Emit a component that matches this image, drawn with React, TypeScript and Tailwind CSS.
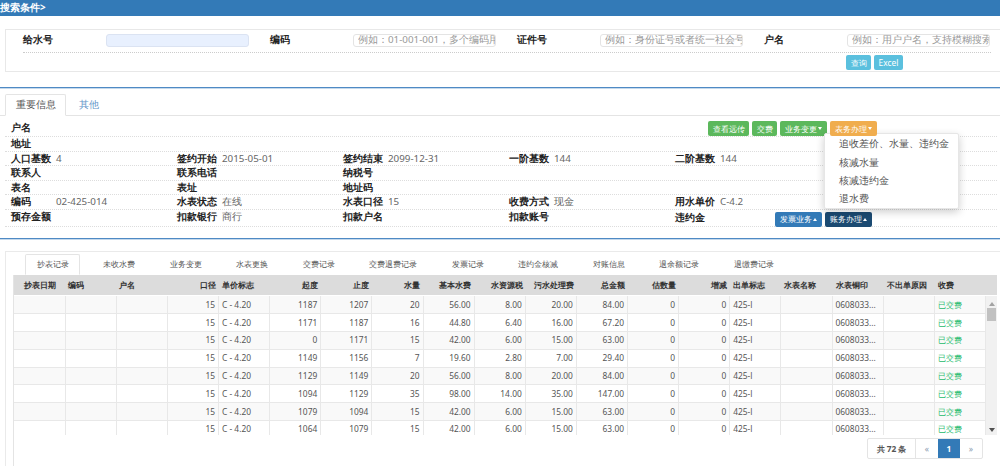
import React from "react";

type Col = { title: string; head: string; cell: string };
const R = "text-right pr-[3px]";
const L = "text-left pl-[3px]";
const cols: Col[] = [
  { title: "抄表日期", head: "text-center", cell: L },
  { title: "编码", head: L, cell: L },
  { title: "户名", head: L, cell: L },
  { title: "口径", head: R, cell: R },
  { title: "单价标志", head: L, cell: L },
  { title: "起度", head: R, cell: R },
  { title: "止度", head: R, cell: R },
  { title: "水量", head: R, cell: R },
  { title: "基本水费", head: R, cell: R },
  { title: "水资源税", head: R, cell: R },
  { title: "污水处理费", head: R, cell: R },
  { title: "总金额", head: R, cell: R },
  { title: "估数量", head: R, cell: R },
  { title: "增减", head: R, cell: R },
  { title: "出单标志", head: L, cell: L },
  { title: "水表名称", head: L, cell: L },
  { title: "水表铜印", head: L, cell: L },
  { title: "不出单原因", head: L, cell: L },
  { title: "收费", head: L, cell: L },
];

const data = [
  ["1187", "1207", "20", "56.00", "8.00", "20.00", "84.00"],
  ["1171", "1187", "16", "44.80", "6.40", "16.00", "67.20"],
  ["0", "1171", "15", "42.00", "6.00", "15.00", "63.00"],
  ["1149", "1156", "7", "19.60", "2.80", "7.00", "29.40"],
  ["1129", "1149", "20", "56.00", "8.00", "20.00", "84.00"],
  ["1094", "1129", "35", "98.00", "14.00", "35.00", "147.00"],
  ["1079", "1094", "15", "42.00", "6.00", "15.00", "63.00"],
  ["1064", "1079", "15", "42.00", "6.00", "15.00", "63.00"],
];

const rows = data.map((d) => [
  "", "", "", "15", "C - 4.20", d[0], d[1], d[2], d[3], d[4], d[5], d[6], "0", "0", "425-l", "", "0608033...", "", "已交费",
]);

const searchFields = [
  { label: "给水号", placeholder: "", filled: true },
  { label: "编码", placeholder: "例如：01-001-001，多个编码用逗号分隔", filled: false },
  { label: "证件号", placeholder: "例如：身份证号或者统一社会号", filled: false },
  { label: "户名", placeholder: "例如：用户户名，支持模糊搜索", filled: false },
];

const lowerTabs = ["抄表记录", "未收水费", "业务变更", "水表更换", "交费记录", "交费退费记录", "发票记录", "违约金核减", "对账信息", "退余额记录", "退缴费记录"];

const info: [string, string][][] = [
  [["人口基数", "4"], ["签约开始", "2015-05-01"], ["签约结束", "2099-12-31"], ["一阶基数", "144"], ["二阶基数", "144"]],
  [["联系人", ""], ["联系电话", ""], ["纳税号", ""], ["", ""], ["", ""]],
  [["表名", ""], ["表址", ""], ["地址码", ""], ["", ""], ["", ""]],
  [["编码", "02-425-014"], ["水表状态", "在线"], ["水表口径", "15"], ["收费方式", "现金"], ["用水单价", "C-4.2"]],
];

function Field({ label, value }: { label: string; value: string }) {
  return (
    <div className="flex items-center">
      <span className="w-[45px] shrink-0 font-bold text-[#222]">{label}</span>
      <span className="text-[#666]">{value}</span>
    </div>
  );
}

function Caret({ up }: { up?: boolean }) {
  return up ? (
    <span className="ml-[1px] inline-block border-x-[2.5px] border-b-[3px] border-x-transparent border-b-white" />
  ) : (
    <span className="ml-[1px] inline-block border-x-[2.5px] border-t-[3px] border-x-transparent border-t-white" />
  );
}

function Btn({ className, children }: { className: string; children: React.ReactNode }) {
  return (
    <button className={`flex h-[15px] items-center justify-center rounded-[2px] text-[8.4px] text-white ${className}`}>
      {children}
    </button>
  );
}

export default function App() {
  return (
    <div className="h-[466px] w-[1000px] overflow-hidden bg-white font-['Liberation_Sans','Noto_Sans_CJK_SC',sans-serif] text-[9.8px] leading-[14px] text-[#555]">
      <div className="flex h-[16px] items-center bg-[#337ab7] font-bold text-white">搜索条件&gt;</div>

      <div className="ml-[5px] mt-[13px] h-[43px] border-y border-l border-[#e8e8e8] pt-[3px]">
        <div className="ml-[17px] flex h-[20px] w-[968px] items-start border-b border-dotted border-[#ccc]">
          {searchFields.map((f) => (
            <div key={f.label} className="flex w-[247px] shrink-0 items-center">
              <span className="w-[83px] shrink-0 font-bold text-[#222]">{f.label}</span>
              <input
                readOnly
                placeholder={f.placeholder}
                className={`h-[13px] w-[143px] rounded-[3px] border pl-[4px] pr-0 text-[9.8px] outline-none placeholder:text-[#999] ${f.filled ? "border-[#dbe3f2] bg-[#e8f0fe]" : "border-[#e4e4e4] bg-white"}`}
              />
            </div>
          ))}
        </div>
        <div className="ml-[840px] mt-[2px] flex gap-[3px]">
          <Btn className="h-[14px] w-[25px] bg-[#5bc0de]">查询</Btn>
          <Btn className="h-[14px] w-[29px] bg-[#5bc0de]">Excel</Btn>
        </div>
      </div>

      <div className="mt-[15px] h-[2px] border-t border-[#4f8ac4] bg-[#c5d9ec]" />

      <div className="mt-[5px] flex h-[22px] items-end border-b border-[#e4e4e4] pl-[5px]">
        <div className="-mb-px flex h-[22px] w-[61px] items-center justify-center rounded-t-[2px] border border-[#e4e4e4] border-b-white bg-white text-[#555]">重要信息</div>
        <div className="flex h-[21px] items-center pl-[13px] text-[#5f96c9]">其他</div>
      </div>

      <div className="ml-[5px] mr-[3px] mt-[5px]">
        <div className="flex h-[15.6px] items-center justify-between border-b border-dotted border-[#ddd] pl-[6px]">
          <Field label="户名" value="" />
          <div className="mr-[113px] -mb-px flex translate-x-0 gap-[3px] pr-[7px]">
            <Btn className="w-[41px] bg-[#5cb85c]">查看远传</Btn>
            <Btn className="w-[25px] bg-[#5cb85c]">交费</Btn>
            <Btn className="w-[47px] bg-[#5cb85c]">业务变更<Caret /></Btn>
            <div className="relative w-[47px]">
              <Btn className="relative z-10 w-[47px] bg-[#f0ad4e]">表务办理<Caret /></Btn>
              <div className="absolute left-[-6px] top-[12px] z-0 w-[135px] rounded-[2px] border border-[#e6e6e6] bg-white pb-px pl-[14px] text-[10px] leading-[18.3px] text-[#555] shadow-[0_3px_8px_rgba(0,0,0,0.2)]">
                <div>追收差价、水量、违约金</div>
                <div>核减水量</div>
                <div>核减违约金</div>
                <div>退水费</div>
              </div>
            </div>
          </div>
        </div>
        <div className="flex h-[15px] items-center border-b border-dotted border-[#ddd] pl-[6px]">
          <Field label="地址" value="" />
        </div>
        {info.map((row, i) => (
          <div key={i} className="grid h-[14.6px] grid-cols-[repeat(5,166px)] items-center border-b border-dotted border-[#ddd] pl-[6px]">
            {row.map(([l, v], j) => (
              <Field key={j} label={l} value={v} />
            ))}
          </div>
        ))}
        <div className="grid h-[17px] grid-cols-[repeat(5,166px)] items-start border-b border-dotted border-[#ddd] pl-[6px]">
          <Field label="预存金额" value="" />
          <Field label="扣款银行" value="商行" />
          <Field label="扣款户名" value="" />
          <Field label="扣款账号" value="" />
          <div className="flex items-center">
            <span className="w-[100px] shrink-0 font-bold text-[#222]">违约金</span>
            <div className="flex gap-[3px] pt-[2px]">
              <Btn className="w-[47px] bg-[#337ab7]">发票业务<Caret up /></Btn>
              <Btn className="w-[47px] bg-[#1b4a72]">账务办理<Caret up /></Btn>
            </div>
          </div>
        </div>
      </div>

      <div className="mt-[11px] h-[2px] border-t border-[#4f8ac4] bg-[#c5d9ec]" />

      <div className="ml-[5px] mt-[11px] h-[220px] border-l border-t border-[#eaeaea] pl-[7px] pt-[2px]">
        <div className="ml-[12px] flex h-[21px] gap-[11.5px] text-[8.4px]">
          {lowerTabs.map((t, i) => (
            <div
              key={t}
              className={`flex h-[21px] items-center rounded-t-[2px] border px-[10.5px] ${i === 0 ? "border-[#e4e4e4] border-b-white" : "border-transparent"}`}
            >
              {t}
            </div>
          ))}
        </div>

        <div className="h-full border-l border-[#e4e4e4] text-[8.4px] leading-[12px]">
          <div className="h-[20px] w-[983px] bg-[#dcdcdc]">
            <table className="w-[972px] table-fixed border-collapse">
              <thead>
                <tr className="h-[20px]">
                  {cols.map((c) => (
                    <th key={c.title} className={`whitespace-nowrap p-0 font-bold text-[#333] ${c.head}`}>
                      {c.title}
                    </th>
                  ))}
                </tr>
              </thead>
            </table>
          </div>
          <div className="flex h-[140px] w-[983px] overflow-hidden pt-px">
            <table className="h-fit w-[972px] shrink-0 table-fixed border-collapse">
              <tbody>
                {rows.map((r, i) => (
                  <tr key={i} className={`h-[17.8px] border-b border-[#e8e8e8] ${i % 2 === 0 ? "bg-[#f9f9f9]" : "bg-white"}`}>
                    {r.map((v, j) => (
                      <td
                        key={j}
                        className={`overflow-hidden whitespace-nowrap border-r border-[#e8e8e8] p-0 ${cols[j].cell} ${j === 18 ? "text-[#1cb96a]" : "text-[#555]"}`}
                      >
                        {v}
                      </td>
                    ))}
                  </tr>
                ))}
              </tbody>
            </table>
            <div className="flex w-[11px] shrink-0 flex-col items-center bg-[#f1f1f1] pt-[6px]">
              <svg width="6" height="4" viewBox="0 0 6 4" className="shrink-0"><path d="M3 0 L6 4 L0 4 Z" fill="#a3a3a3" /></svg>
              <div className="mt-[2px] h-[13px] w-[9px] shrink-0 bg-[#c1c1c1]" />
              <svg width="6" height="4" viewBox="0 0 6 4" className="mt-auto mb-[3px] shrink-0"><path d="M0 0 L6 0 L3 4 Z" fill="#505050" /></svg>
            </div>
          </div>
          <div className="mt-[3px] flex w-[969px] justify-end">
            <div className="flex h-[21px] overflow-hidden rounded-[2px] border border-[#e4e4e4] leading-[19px]">
              <span className="w-[48px] border-r border-[#e4e4e4] text-center font-bold text-[#555]">共 72 条</span>
              <span className="w-[22px] text-center text-[#8a9bb0]">«</span>
              <span className="w-[22px] bg-[#337ab7] text-center font-bold text-white">1</span>
              <span className="w-[22px] text-center text-[#8a9bb0]">»</span>
            </div>
          </div>
        </div>
      </div>
    </div>
  );
}
